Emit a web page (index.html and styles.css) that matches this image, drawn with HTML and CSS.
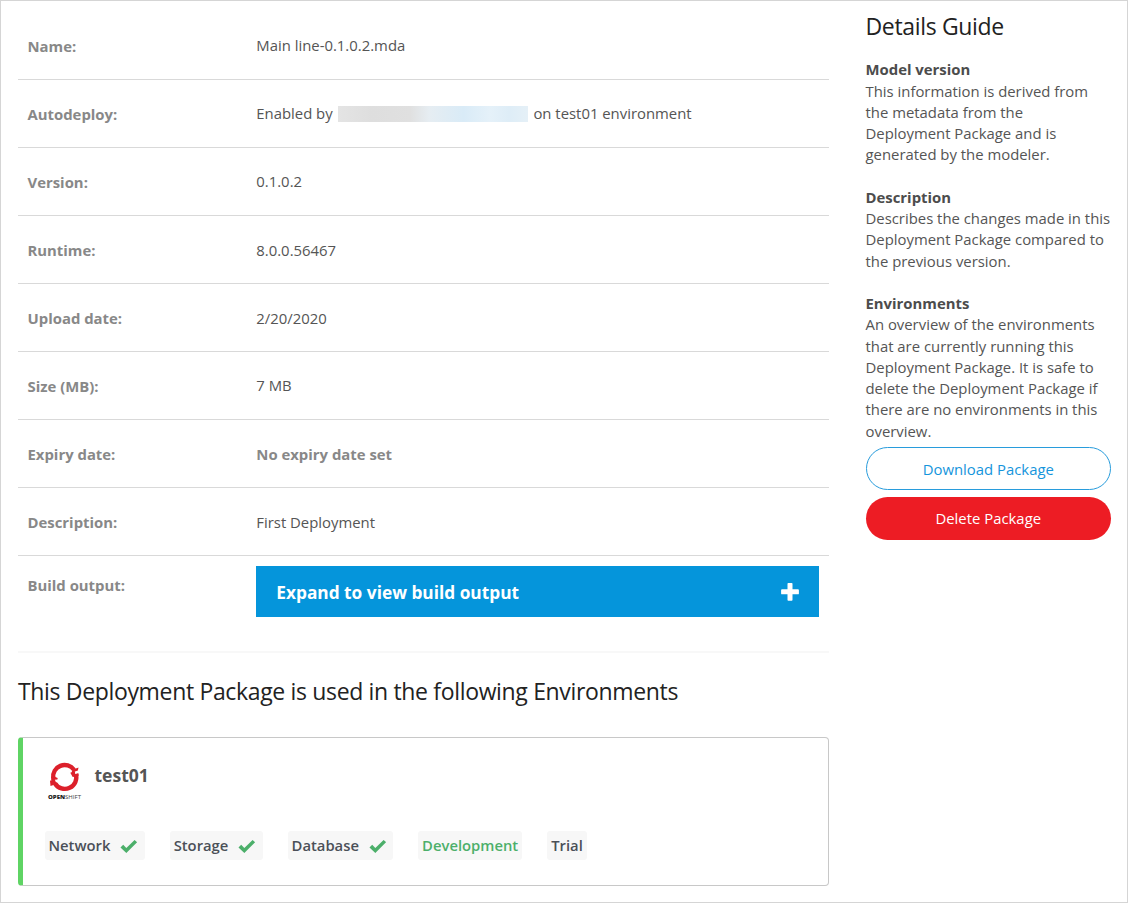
FILE: index.html
```html
<!DOCTYPE html>
<html lang="en">
<head>
<meta charset="utf-8">
<title>Deployment Package Details</title>
<link rel="stylesheet" href="styles.css">
</head>
<body>
<div class="page">
  <main class="main">
    <dl class="details">
      <div class="row"><dt>Name:</dt><dd>Main line-0.1.0.2.mda</dd></div>
      <div class="row row-low"><dt>Autodeploy:</dt><dd>Enabled by <span class="redacted"></span> on test01 environment</dd></div>
      <div class="row row-low"><dt>Version:</dt><dd>0.1.0.2</dd></div>
      <div class="row"><dt>Runtime:</dt><dd>8.0.0.56467</dd></div>
      <div class="row"><dt>Upload date:</dt><dd>2/20/2020</dd></div>
      <div class="row row-low"><dt>Size (MB):</dt><dd>7 MB</dd></div>
      <div class="row"><dt>Expiry date:</dt><dd class="strong">No expiry date set</dd></div>
      <div class="row"><dt>Description:</dt><dd>First Deployment</dd></div>
      <div class="row row-build"><dt>Build output:</dt><dd>
        <button class="expand"><span>Expand to view build output</span>
          <svg class="plus" viewBox="0 0 18 18"><path d="M7.3 0h3.4q.8 0 .8.8v5.500h5.500q.9 0 .9.9v3.200q0 .9-.9.9h-5.500v5.500q0 .9-.8.9H7.300q-.8 0-.8-.9v-5.500H1q-.9 0-.9-.9V7.200q0-.9.9-.9h5.500V.8q0-.8.8-.8z" fill="#fff"/></svg>
        </button></dd></div>
    </dl>
    <h2 class="heading">This Deployment Package is used in the following Environments</h2>
    <section class="card">
      <div class="env">
        <svg class="logo" viewBox="0 0 36 40">
          <g fill="none" stroke="#dc202b" stroke-width="4.400">
            <path d="M6.300 17A11.500 11.300 0 0 1 27 8.700"/>
            <path d="M28.700 13A11.500 11.300 0 0 1 8 22.500"/>
          </g>
          <path d="M25.500 8.700l6-2.200-.6 2.900-6.400 2.300zM23.300 11.700l4.500-1.800.5 3.300 3.500-.8-.3 2.700-5.800 1zM4.100 15.500l3 .1 3.600 1.300-.3 1.600-6.200.5zM3 19.700l4.600-1.700 1.200 3 2.200 1.500-4.500 1.600-3 .8z" fill="#dc202b"/>
          <text class="logo-text" x="1" y="37.600" textLength="33" lengthAdjust="spacingAndGlyphs"><tspan class="logo-bold">OPEN</tspan>SHIFT</text>
        </svg>
        <h3 class="env-name">test01</h3>
      </div>
      <div class="tags">
        <span class="tag">Network <svg class="check" viewBox="0 0 18 15"><path d="M0.500 8.500L3.300 5.800 6.500 9 15 .7 17.600 3.100 6.500 14.300z" fill="#4caf6a"/></svg></span>
        <span class="tag">Storage <svg class="check" viewBox="0 0 18 15"><path d="M0.500 8.500L3.300 5.800 6.500 9 15 .7 17.600 3.100 6.500 14.300z" fill="#4caf6a"/></svg></span>
        <span class="tag">Database <svg class="check" viewBox="0 0 18 15"><path d="M0.500 8.500L3.300 5.800 6.500 9 15 .7 17.600 3.100 6.500 14.300z" fill="#4caf6a"/></svg></span>
        <span class="tag tag-green">Development</span>
        <span class="tag">Trial</span>
      </div>
    </section>
  </main>
  <aside class="guide">
    <h2 class="heading">Details Guide</h2>
    <div class="topic"><h4>Model version</h4><p>This information is derived from the metadata from the Deployment Package and is generated by the modeler.</p></div>
    <div class="topic"><h4>Description</h4><p>Describes the changes made in this Deployment Package compared to the previous version.</p></div>
    <div class="topic"><h4>Environments</h4><p>An overview of the environments that are currently running this Deployment Package. It is safe to delete the Deployment Package if there are no environments in this overview.</p></div>
    <div class="actions">
      <button class="btn btn-outline">Download Package</button>
      <button class="btn btn-danger">Delete Package</button>
    </div>
  </aside>
</div>
</body>
</html>
```
FILE: styles.css
```css
* { box-sizing: border-box; }
body, dl, dd, h2, h3, h4, p { margin: 0; }
body { background: #fff; font-family: "Open Sans", sans-serif; font-size: 14.88px; line-height: 21.25px; color: #555; }
button { font-family: inherit; border: 0; padding: 0; }
.page { width: 1128px; height: 903px; border: 1px solid #d5d5d5; display: flex; overflow: hidden; }
.main { width: 811px; margin-left: 17px; padding-top: 11px; }
.row { height: 68px; border-bottom: 1px solid #d9d9d9; padding: 0 10px 0 9.500px; display: grid; grid-template-columns: 228.800px 1fr; align-items: center; }
.row dt { font-weight: 700; color: #888; padding-top: 2px; }
.row dd { white-space: nowrap; padding-top: 2px; }
.row:first-child dd { padding-top: 0; }
.row-low dd { padding-top: 0; }
.row .strong { font-weight: 700; color: #888; }
.redacted { display: inline-block; width: 190px; height: 16px; margin: 0 1.500px; vertical-align: -3px; background: linear-gradient(90deg, #e4e4e4, #dedede 18%, #e0e0e0 38%, #e6edf2 48%, #d9ebf7 66%, #e5f1f9 80%, #deedf7 90%, #e5f0f7); }
.row-build { height: 97px; align-items: start; border-bottom: 2px solid #f8f8f8; }
.row-build dt { padding-top: 19px; }
.row-build dd { padding-top: 10px; }
.expand { width: 100%; height: 51px; background: #0595db; color: #fff; font-size: 17.300px; font-weight: 700; display: flex; justify-content: space-between; align-items: center; padding: 1px 20px 0; }
.plus { width: 18px; height: 18px; }
.heading { font-size: 23px; letter-spacing: -0.340px; font-weight: 400; line-height: 32px; color: #222; white-space: nowrap; }
.main .heading { margin-top: 22px; }
.card { height: 149px; margin-top: 30px; border: 1px solid #c8c8c8; border-left: 5px solid #5fd464; border-radius: 4px; padding: 23px 21px 0; }
.env { display: flex; gap: 12px; height: 40px; margin-left: 3px; }
.logo { width: 36px; height: 40px; }
.logo-text { font-size: 5.800px; fill: #444; }
.logo-bold { font-weight: 800; fill: #222; }
.env-name { font-size: 17.500px; line-height: 28px; font-weight: 700; color: #555; margin-left: -0.500px; }
.tags { display: flex; gap: 25px; margin-top: 30px; margin-left: 0.500px; }
.tag { height: 29px; padding: 1px 4px 0; display: flex; align-items: center; background: #f7f7f7; border-radius: 3px; color: #4b5058; font-weight: 600; font-size: 14.800px; }
.tag-green { color: #4caf6a; }
.check { width: 17.500px; height: 15px; margin: 0 3px 0 9.700px; }
.guide { width: 245.500px; margin-left: 36.500px; padding-top: 9px; }
.topic { margin-bottom: 21.250px; }
.guide .heading { margin-bottom: 17.300px; letter-spacing: -0.340px; }
.guide h4 { font-size: inherit; line-height: inherit; color: #4c4c4c; }
.actions { display: flex; flex-direction: column; gap: 7px; margin-top: -16.300px; }
.btn { height: 43px; border-radius: 22px; font-size: 14.880px; }
.btn-outline { background: #fff; border: 1px solid #289cdc; color: #1595dc; padding-top: 1px; }
.btn-danger { background: #ed1c24; color: #fff; }
```
